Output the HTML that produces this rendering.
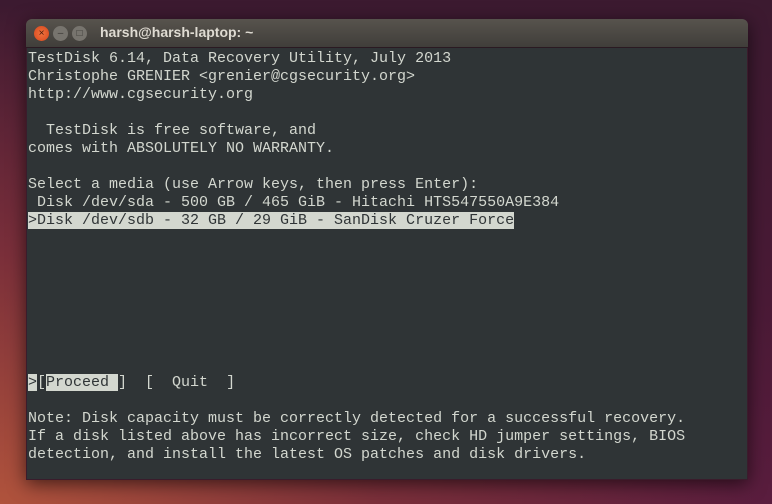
<!DOCTYPE html>
<html><head><meta charset="utf-8"><style>
html,body{margin:0;padding:0;width:772px;height:504px;overflow:hidden}
body{background:radial-gradient(ellipse at 0% 100%,#b0533c 0%,#7a2f3a 35%,rgba(80,25,50,0) 70%),linear-gradient(180deg,#3c1a30 0%,#4a1a36 60%,#5a1d3e 100%);position:relative;font-family:"Liberation Sans",sans-serif}
.win{position:absolute;left:26px;top:19px;width:722px;height:461px;box-shadow:0 4px 18px rgba(0,0,0,.6);border-radius:6px 6px 0 0}
.title{height:28px;background:linear-gradient(#57534d,#403e3a);border-radius:6px 6px 0 0;position:relative;border-bottom:1px solid #2a1a22}
.title .t{position:absolute;left:74px;top:5px;color:#dfdbd2;font-weight:bold;font-size:14px}
.b{position:absolute;top:7px;width:15px;height:15px;border-radius:50%;font-size:10px;line-height:15px;text-align:center}
.term{position:absolute;top:29px;left:0;right:0;bottom:0;background:#2f3436;border:1px solid #3a1c2c;border-top:none}
pre{margin:0;position:absolute;left:1px;top:2px;font-family:"Liberation Mono",monospace;font-size:15px;line-height:18px;color:#d3d7cf}
.h{background:#d3d7cf;color:#2f3436}
</style></head><body>
<div class="win">
<div class="title">
<div class="b" style="left:8px;background:radial-gradient(#f0733f,#d6461c);color:#4a1a0a">×</div>
<div class="b" style="left:27px;background:#77746e;color:#3a3835">–</div>
<div class="b" style="left:46px;background:#77746e;color:#3a3835">□</div>
<div class="t">harsh@harsh-laptop: ~</div>
</div>
<div class="term"><pre>TestDisk 6.14, Data Recovery Utility, July 2013
Christophe GRENIER &lt;grenier@cgsecurity.org&gt;
http://www.cgsecurity.org

  TestDisk is free software, and
comes with ABSOLUTELY NO WARRANTY.

Select a media (use Arrow keys, then press Enter):
 Disk /dev/sda - 500 GB / 465 GiB - Hitachi HTS547550A9E384
<span class="h">&gt;Disk /dev/sdb - 32 GB / 29 GiB - SanDisk Cruzer Force</span>








<span class="h">&gt;</span>[<span class="h">Proceed </span>]  [  Quit  ]

Note: Disk capacity must be correctly detected for a successful recovery.
If a disk listed above has incorrect size, check HD jumper settings, BIOS
detection, and install the latest OS patches and disk drivers.</pre></div>
</div>
</body></html>
